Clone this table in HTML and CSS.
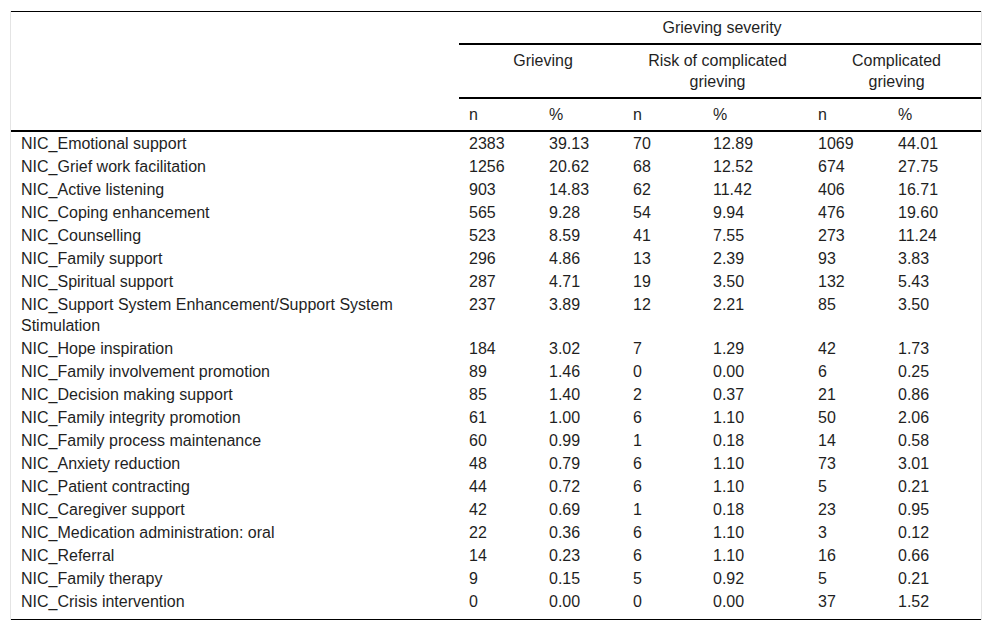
FILE: index.html
```html
<!DOCTYPE html>
<html lang="en">
<head>
<meta charset="utf-8">
<title>Grieving severity</title>
<link rel="stylesheet" href="styles.css">
</head>
<body>
<div class="frame">
<table class="data">
  <colgroup>
    <col class="c-label"><col class="c-n1"><col class="c-p1"><col class="c-n2"><col class="c-p2"><col class="c-n3"><col class="c-p3">
  </colgroup>
  <thead>
    <tr>
      <th rowspan="3" class="corner"></th>
      <th colspan="6" class="group">Grieving severity</th>
    </tr>
    <tr>
      <th colspan="2" class="group">Grieving</th>
      <th colspan="2" class="group">Risk of complicated<br>grieving</th>
      <th colspan="2" class="group">Complicated<br>grieving</th>
    </tr>
    <tr class="units">
      <th>n</th><th>%</th><th>n</th><th>%</th><th>n</th><th>%</th>
    </tr>
  </thead>
  <tbody>
    <tr><td>NIC_Emotional support</td><td>2383</td><td>39.13</td><td>70</td><td>12.89</td><td>1069</td><td>44.01</td></tr>
    <tr><td>NIC_Grief work facilitation</td><td>1256</td><td>20.62</td><td>68</td><td>12.52</td><td>674</td><td>27.75</td></tr>
    <tr><td>NIC_Active listening</td><td>903</td><td>14.83</td><td>62</td><td>11.42</td><td>406</td><td>16.71</td></tr>
    <tr><td>NIC_Coping enhancement</td><td>565</td><td>9.28</td><td>54</td><td>9.94</td><td>476</td><td>19.60</td></tr>
    <tr><td>NIC_Counselling</td><td>523</td><td>8.59</td><td>41</td><td>7.55</td><td>273</td><td>11.24</td></tr>
    <tr><td>NIC_Family support</td><td>296</td><td>4.86</td><td>13</td><td>2.39</td><td>93</td><td>3.83</td></tr>
    <tr><td>NIC_Spiritual support</td><td>287</td><td>4.71</td><td>19</td><td>3.50</td><td>132</td><td>5.43</td></tr>
    <tr><td>NIC_Support System Enhancement/Support System Stimulation</td><td>237</td><td>3.89</td><td>12</td><td>2.21</td><td>85</td><td>3.50</td></tr>
    <tr><td>NIC_Hope inspiration</td><td>184</td><td>3.02</td><td>7</td><td>1.29</td><td>42</td><td>1.73</td></tr>
    <tr><td>NIC_Family involvement promotion</td><td>89</td><td>1.46</td><td>0</td><td>0.00</td><td>6</td><td>0.25</td></tr>
    <tr><td>NIC_Decision making support</td><td>85</td><td>1.40</td><td>2</td><td>0.37</td><td>21</td><td>0.86</td></tr>
    <tr><td>NIC_Family integrity promotion</td><td>61</td><td>1.00</td><td>6</td><td>1.10</td><td>50</td><td>2.06</td></tr>
    <tr><td>NIC_Family process maintenance</td><td>60</td><td>0.99</td><td>1</td><td>0.18</td><td>14</td><td>0.58</td></tr>
    <tr><td>NIC_Anxiety reduction</td><td>48</td><td>0.79</td><td>6</td><td>1.10</td><td>73</td><td>3.01</td></tr>
    <tr><td>NIC_Patient contracting</td><td>44</td><td>0.72</td><td>6</td><td>1.10</td><td>5</td><td>0.21</td></tr>
    <tr><td>NIC_Caregiver support</td><td>42</td><td>0.69</td><td>1</td><td>0.18</td><td>23</td><td>0.95</td></tr>
    <tr><td>NIC_Medication administration: oral</td><td>22</td><td>0.36</td><td>6</td><td>1.10</td><td>3</td><td>0.12</td></tr>
    <tr><td>NIC_Referral</td><td>14</td><td>0.23</td><td>6</td><td>1.10</td><td>16</td><td>0.66</td></tr>
    <tr><td>NIC_Family therapy</td><td>9</td><td>0.15</td><td>5</td><td>0.92</td><td>5</td><td>0.21</td></tr>
    <tr class="last"><td>NIC_Crisis intervention</td><td>0</td><td>0.00</td><td>0</td><td>0.00</td><td>37</td><td>1.52</td></tr>
  </tbody>
</table>
</div>
</body>
</html>
```
FILE: styles.css
```css
html, body {
  margin: 0;
  padding: 0;
  background: #ffffff;
}

body {
  font-family: "Liberation Sans", Arial, sans-serif;
  font-size: 16px;
  color: #1f1f1f;
}

.frame {
  margin: 11px 0 0 10px;
  width: 970px;
  border-left: 1px solid #e4e4e4;
  border-right: 1px solid #e4e4e4;
}

.data {
  width: 970px;
  border-collapse: collapse;
  table-layout: fixed;
  border-top: 1px solid #000;
  border-bottom: 1px solid #000;
}

.c-label { width: 448px; }
.c-n1 { width: 80px; }
.c-p1 { width: 84px; }
.c-n2 { width: 80px; }
.c-p2 { width: 105px; }
.c-n3 { width: 80px; }
.c-p3 { width: 93px; }

.data th {
  font-weight: normal;
  line-height: 21px;
  padding: 5px 10px;
  text-align: left;
  vertical-align: top;
}

.data th.group {
  text-align: center;
  border-bottom: 2px solid #000;
  padding: 5px 8px 5px 12px;
}

.data .units th,
.data th.corner {
  border-bottom: 2px solid #000;
}

.data td {
  line-height: 21px;
  padding: 1px 10px;
  text-align: left;
  vertical-align: top;
}

.data tr.last td {
  padding-bottom: 7px;
}
```
